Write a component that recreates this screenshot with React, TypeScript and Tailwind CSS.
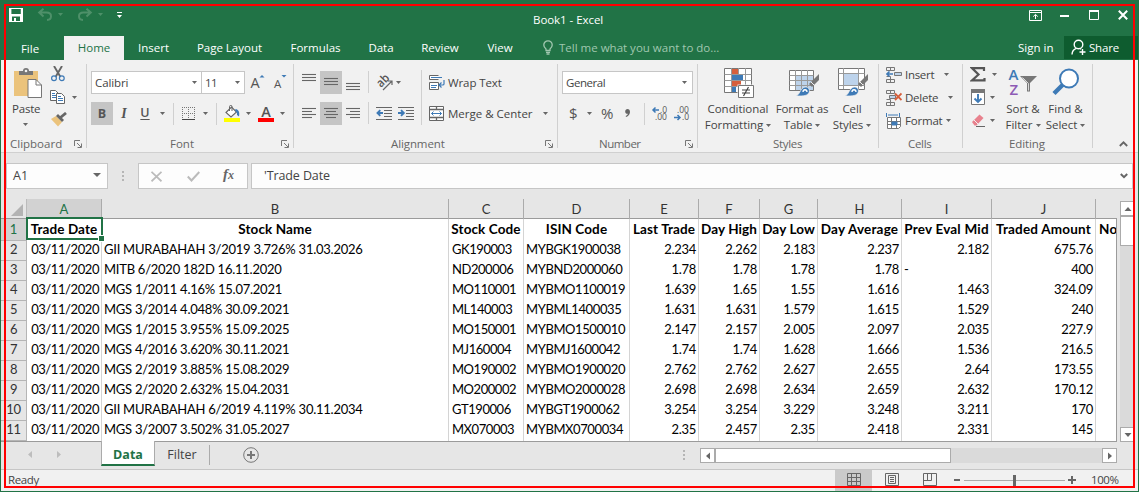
import React from "react";

type P = { className?: string };

const Caret = ({ className = "" }: P) => (
  <svg className={`shrink-0 ${className}`} width="5" height="3" viewBox="0 0 5 3">
    <path d="M0 0h5L2.5 3z" fill="#666" />
  </svg>
);

const Sep = ({ className = "" }: P) => <span className={`w-px shrink-0 bg-[#d0d0d0] ${className}`} />;

const Launcher = () => (
  <svg className="ml-auto mr-[4px] shrink-0" width="8" height="8" viewBox="0 0 8 8" fill="none" stroke="#777">
    <path d="M.5 6V.5H6M3 3l4 4M7.5 3.5v4h-4" />
  </svg>
);

function Group({ className, label, labelClass, launcher, children }: { className: string; label: string; labelClass: string; launcher?: boolean; children: React.ReactNode }) {
  return (
    <section className={`flex shrink-0 ${className}`}>
      <div className="flex min-w-0 flex-1 flex-col">
        <div className="h-[76px] pt-[3px]">{children}</div>
        <div className="flex h-[16px] items-center text-[#666]">
          <span className={`leading-4 ${labelClass}`}>{label}</span>
          {launcher && <Launcher />}
        </div>
      </div>
      <Sep className="mt-1 h-[84px]" />
    </section>
  );
}

const Lines = ({ rows, className = "", selected }: P & { rows: [number, number, number][]; selected?: boolean }) => (
  <span className={`flex h-[23px] w-[22px] shrink-0 ${selected ? "bg-[#c5c5c5]" : ""} ${className}`}>
    <svg width="22" height="23" viewBox="0 0 22 23" stroke="#666" strokeWidth="1.1">
      {rows.map(([x1, x2, y]) => (
        <path key={y} d={`M${x1} ${y}H${x2}`} />
      ))}
    </svg>
  </span>
);

function TitleBar() {
  return (
    <header className="flex h-[36px] items-start text-white">
      <svg className="ml-[8px] mt-[8px]" width="14" height="14" viewBox="0 0 14 14">
        <path fillRule="evenodd" d="M0 0h14v14H0zM2.4 1v5h9.4V1zM3 8.6V13h2v-3h2v3h4V8.6z" fill="#fff" />
      </svg>
      <svg className="ml-[14px] mt-[8px]" width="16" height="13" viewBox="0 0 16 13" fill="none" stroke="#4e9069" strokeWidth="2">
        <path d="M2 4.6h7.5c3 0 4.500 1.600 4.500 3.600s-1.500 3.600-4 3.800M6.500 .8L2.200 4.600l4.300 3.900" />
      </svg>
      <svg className="ml-[5px] mt-[13px]" width="5" height="3" viewBox="0 0 5 3"><path d="M0 0h5L2.500 3z" fill="#4e9069" /></svg>
      <svg className="ml-[14px] mt-[8px]" width="16" height="13" viewBox="0 0 16 13" fill="none" stroke="#4e9069" strokeWidth="2">
        <path d="M14 4.600H6.500C3.500 4.600 2 6.200 2 8.200s1.500 3.600 4 3.800M9.500 .8l4.300 3.800-4.300 3.900" />
      </svg>
      <svg className="ml-[5px] mt-[13px]" width="5" height="3" viewBox="0 0 5 3"><path d="M0 0h5L2.500 3z" fill="#4e9069" /></svg>
      <svg className="ml-[14px] mt-[12px]" width="5" height="6" viewBox="0 0 5 6"><path d="M0 0h5v1H0zM0 3h5L2.500 6z" fill="#fff" /></svg>
      <span className="ml-[411px] mt-[12px] w-[90px] whitespace-nowrap text-[11.5px] leading-4 tracking-[-0.05px]">Book1 - Excel</span>
      <svg className="ml-[406px] mt-[10px]" width="13" height="11" viewBox="0 0 13 11" fill="none" stroke="#fff">
        <path d="M.5 .5h12v10H.5zM.5 2.500h12M6.500 9V4.500M4.200 6.600l2.300-2.200 2.300 2.200" />
      </svg>
      <svg className="ml-[18px] mt-[15px]" width="9" height="2"><path d="M0 0h9v2H0z" fill="#fff" /></svg>
      <svg className="ml-[20px] mt-[10px]" width="10" height="10" viewBox="0 0 10 10" fill="none" stroke="#fff">
        <path d="M.5 .5h9v9h-9z" /><path d="M0 1h10" strokeWidth="2" />
      </svg>
      <svg className="ml-[19px] mt-[10px]" width="10" height="10" viewBox="0 0 10 10" stroke="#fff" strokeWidth="2">
        <path d="M.8 .8l8.400 8.400M9.200 .8L.8 9.200" />
      </svg>
    </header>
  );
}

function TabStrip() {
  return (
    <nav className="flex h-[24px] items-stretch whitespace-nowrap text-center text-[11.5px] leading-[24px] text-white">
      <span className="w-[58px] pt-px">File</span>
      <span className="ml-[5px] w-[60px] bg-[#f1f1f1] text-[#217346]">Home</span>
      <span className="w-[59px]">Insert</span>
      <span className="w-[93px]">Page Layout</span>
      <span className="w-[79px]">Formulas</span>
      <span className="w-[52px]">Data</span>
      <span className="w-[66px]">Review</span>
      <span className="w-[54px]">View</span>
      <svg className="ml-[16px] mt-[4px]" width="10" height="15" viewBox="0 0 10 15" fill="none" stroke="#a0c7af" strokeWidth="1.300">
        <path d="M3 10.500V9C1.700 8 .8 6.700 .8 5a4.200 4.200 0 018.400 0c0 1.700-.9 3-2.200 4v1.500zM3 12.300h4M3.500 14h3" />
      </svg>
      <span className="ml-[6px] w-[162px] text-left text-[#a0c7af]">Tell me what you want to do...</span>
      <span className="ml-[297px] w-[46px] text-left">Sign in</span>
      <span className="flex h-[23px] flex-1 bg-[#0e5c2f]">
        <svg className="ml-[7px] mt-[3px]" width="16" height="17" viewBox="0 0 16 17" fill="none" stroke="#fff" strokeWidth="1.400">
          <circle cx="7.500" cy="5.500" r="4.300" /><path d="M5.500 9.300C3 10 1.200 12 1 15.500M9 9.500l1 .8M11.500 10v6M8.500 13h6" />
        </svg>
        <span className="ml-[2px] tracking-[-0.2px]">Share</span>
      </span>
    </nav>
  );
}

const Clipboard = () => (
  <Group className="w-[86px]" label="Clipboard" labelClass="ml-[9px]" launcher>
    <div className="flex">
      <div className="flex w-[42px] flex-col">
        <svg className="ml-[13px] mt-[5px]" width="28" height="30" viewBox="0 0 28 30">
          <path d="M0 3h24v25H0z" fill="#ebc37c" />
          <path d="M5 7V3h4a3 3 0 016 0h4v4z" fill="#777" /><circle cx="12" cy="3" r="1.300" fill="#f1f1f1" />
          <path d="M14 11.500h8l5.500 5.500v12.500H14z" fill="#fff" stroke="#777" /><path d="M22 11.500V17h5.500" fill="none" stroke="#777" />
        </svg>
        <span className="ml-[11px] mt-[3px] leading-4 tracking-[-0.2px]">Paste</span>
        <Caret className="ml-[22px] mt-[6px]" />
      </div>
      <div className="flex w-[43px] flex-col">
        <svg className="ml-[8px] mt-[3px]" width="14" height="16" viewBox="0 0 14 16" fill="none">
          <path d="M3 0l6.500 11M11 0L4.500 11" stroke="#666" strokeWidth="1.900" />
          <circle cx="3" cy="12.200" r="2.400" stroke="#3e7ab6" strokeWidth="1.200" /><circle cx="10.800" cy="12.200" r="2.400" stroke="#3e7ab6" strokeWidth="1.200" />
        </svg>
        <div className="ml-[7px] mt-[8px] flex items-center">
          <svg width="15" height="14" viewBox="0 0 15 14" stroke="#666">
            <path d="M.5 .5h5l2.500 2.500v7.500H.5z" fill="#fff" /><path d="M2 3.500h3M2 5.500h4M2 7.500h4" stroke="#3e7ab6" />
            <path d="M6.500 3.500h5l3 3v7h-8z" fill="#fff" /><path d="M8 6.500h3M8 8.500h5M8 10.500h5" stroke="#3e7ab6" />
          </svg>
          <Caret className="ml-[7px]" />
        </div>
        <svg className="ml-[8px] mt-[8px]" width="16" height="15" viewBox="0 0 16 15">
          <path d="M0 7l5-3 6 6-4 4.500z" fill="#ebc37c" /><path d="M5 4l2-2 6 6-2 2z" fill="#666" /><path d="M9.500 5.500L15 1" stroke="#666" strokeWidth="2.800" />
        </svg>
      </div>
    </div>
  </Group>
);

const FontGroup = () => (
  <Group className="w-[207px]" label="Font" labelClass="ml-[83px]" launcher>
    <div className="mt-[8px] flex h-[23px] items-center">
      <span className="ml-[4px] flex h-[23px] w-[111px] items-center border border-[#c6c6c6] bg-white pl-[3px] leading-none tracking-[-0.1px]">Calibri<Caret className="ml-auto mr-[4px]" /></span>
      <span className="-ml-px flex h-[23px] w-[44px] items-center border border-[#c6c6c6] bg-white pl-[3px] leading-none tracking-[-0.5px]">11<Caret className="ml-auto mr-[4px]" /></span>
      <svg className="ml-[5px] overflow-visible" width="40" height="23" viewBox="0 0 40 23" fill="#555" fontFamily="Open Sans">
        <text x="0.5" y="17" fontSize="14.500">A</text><path d="M9.500 6.500h5L12 4z" fill="#3e7ab6" />
        <text x="24" y="17" fontSize="11.500">A</text><path d="M31.500 4h5L34 6.500z" fill="#3e7ab6" />
      </svg>
    </div>
    <div className="mt-[8px] flex h-[23px] items-center text-[#555]">
      <span className="ml-[4px] w-[22px] bg-[#c5c5c5] text-center text-[12.500px] font-bold leading-[23px]">B</span>
      <span className="w-[22px] text-center font-['Liberation_Serif'] text-[14px] font-bold italic">I</span>
      <span className="w-[20px] text-center text-[12.500px] font-semibold underline underline-offset-2">U</span>
      <Caret className="ml-[5px]" />
      <Sep className="ml-[8px] h-[22px]" />
      <svg className="ml-[8px]" width="13" height="13" viewBox="0 0 13 13" fill="none" stroke="#777">
        <path d="M0 .5h13M0 6.500h13M.5 0v12M6.500 0v12M12.500 0v12" strokeDasharray="1 1" /><path d="M0 12.500h13" stroke="#444" />
      </svg>
      <Caret className="ml-[8px]" />
      <Sep className="ml-[8px] h-[22px]" />
      <svg className="ml-[7px]" width="16" height="17" viewBox="0 0 16 17">
        <path d="M2 7.500L7.500 2l5 5L7 12z" fill="#fff" stroke="#666" strokeWidth="1.100" /><path d="M5.500 6V1.500C5.500 0 8 0 8 1.500V6" fill="none" stroke="#666" />
        <path d="M11.500 4c3 .5 4.500 3 3.500 7.500l-2-1.500c.3-2-.5-3.500-2-4z" fill="#3e7ab6" /><path d="M0 13h16v4H0z" fill="#ff0" />
      </svg>
      <Caret className="ml-[6px]" />
      <svg className="ml-[7px] overflow-visible" width="16" height="17" viewBox="0 0 16 17">
        <text x="8" y="11.500" textAnchor="middle" fontSize="14.500" fontWeight="600" fill="#555" fontFamily="Open Sans">A</text><path d="M0 13h16v4H0z" fill="red" />
      </svg>
      <Caret className="ml-[6px]" />
    </div>
  </Group>
);

const Alignment = () => (
  <Group className="w-[264px]" label="Alignment" labelClass="ml-[97px] tracking-[-0.1px]" launcher>
    <div className="flex pt-[7px]">
      <div className="mt-px w-[74px]">
        <div className="flex">
          <Lines className="ml-[4px]" rows={[[4, 18, 3.500], [4, 18, 6.500], [4, 18, 9.500]]} />
          <Lines selected rows={[[4, 18, 7.500], [4, 18, 10.500], [4, 18, 13.500]]} />
          <Lines rows={[[4, 18, 12.500], [4, 18, 15.500], [4, 18, 18.500]]} />
        </div>
        <div className="mt-[8px] flex">
          <Lines className="ml-[4px]" rows={[[4, 18, 6.500], [4, 14, 9.500], [4, 18, 12.500], [4, 14, 15.500]]} />
          <Lines selected rows={[[4, 18, 6.500], [6, 16, 9.500], [4, 18, 12.500], [6, 16, 15.500]]} />
          <Lines rows={[[4, 18, 6.500], [8, 18, 9.500], [4, 18, 12.500], [8, 18, 15.500]]} />
        </div>
      </div>
      <div className="mt-px flex flex-col gap-[9px]"><Sep className="h-[22px]" /><Sep className="h-[22px]" /></div>
      <div className="mt-px w-[52px]">
        <div className="flex h-[23px] items-center">
          <svg className="ml-[7px] overflow-visible" width="17" height="16" viewBox="0 0 17 16">
            <text transform="translate(5 13) rotate(-45)" x="0" y="0" fontSize="12" fontWeight="600" fill="#555" fontFamily="Open Sans" textLength="13" lengthAdjust="spacingAndGlyphs">ab</text>
            <path d="M7 15L15.500 6.500M12 6h4v4" fill="none" stroke="#666" strokeWidth="1.200" />
          </svg>
          <Caret className="ml-[3px]" />
        </div>
        <div className="mt-[8px] flex h-[23px] items-center">
          <svg className="ml-[7px]" width="38" height="13" viewBox="0 0 38 13" fill="none" stroke="#666">
            <path d="M0 .5h16M8 3.500h8M8 6.500h8M8 9.500h8M0 12.500h16M22 .5h16M30 3.500h8M30 6.500h8M30 9.500h8M22 12.500h16" />
            <path d="M7 6H2M4.300 3.200L1.500 6l2.800 2.800M22 6h5M25 3.200L27.800 6 25 8.800" stroke="#3e7ab6" strokeWidth="1.900" />
          </svg>
        </div>
      </div>
      <Sep className="h-[55px]" />
      <div className="mt-px">
        <div className="flex h-[23px] items-center">
          <svg className="ml-[7px]" width="16" height="16" viewBox="0 0 16 16" fill="none" stroke="#666">
            <path d="M9.500 4.500h-9v-4h9M.5 7.500h9v7h-9z" fill="#fff" /><path d="M2 2.500h11M2 10.500h6M2 12.500h5M15 5v4c0 .8-.5 1-1.500 1H10M12.500 7.500L10 10l2.500 2.500" stroke="#3e7ab6" strokeWidth="1.200" />
          </svg>
          <span className="ml-[3px] tracking-[-0.1px]">Wrap Text</span>
        </div>
        <div className="mt-[8px] flex h-[23px] items-center">
          <svg className="ml-[7px]" width="15" height="15" viewBox="0 0 15 15" fill="none" stroke="#666">
            <path d="M.5 .5h14v14H.5z" fill="#fff" /><path d="M.5 3.500h14M.5 11.500h14M7.500 0v3M7.500 12v3" strokeWidth="1.300" /><path d="M2.500 7.500h10M4.500 5.500l-2 2 2 2M10.500 5.500l2 2-2 2" stroke="#3e7ab6" />
          </svg>
          <span className="ml-[4px] w-[95px]">Merge &amp; Center</span>
          <Caret />
        </div>
      </div>
    </div>
  </Group>
);

const NumberGroup = () => (
  <Group className="w-[140px]" label="Number" labelClass="ml-[41px] tracking-[-0.5px]" launcher>
    <div className="mt-[8px] flex">
      <span className="ml-[4px] flex h-[23px] w-[131px] items-center border border-[#c6c6c6] bg-white pl-[3px] leading-none tracking-[-0.45px]">General<Caret className="ml-auto mr-[5px]" /></span>
    </div>
    <div className="mt-[8px] flex h-[23px] items-center text-[#555]">
      <span className="ml-[11px] w-[18px] text-[15px] leading-none">$</span>
      <Caret />
      <span className="ml-[9px] w-[22px] text-[15px] leading-none">%</span>
      <svg className="ml-[2px] mt-[-2px]" width="5" height="8" viewBox="0 0 5 8"><path d="M2.500 0C4 0 5 1.200 5 3c0 2.200-1.500 4.200-4 5l-.3-1C2 6.500 2.700 5.800 2.800 4.800 1.200 5 .2 4 .2 2.500.2 1 1.200 0 2.500 0z" fill="#666" /></svg>
      <Sep className="ml-[14px] h-[22px]" />
      <svg className="ml-[7px] overflow-visible" width="37" height="14" viewBox="0 0 37 14" fill="#555" fontFamily="Open Sans" fontSize="8.500">
        <text x="8" y="6">.0</text><text x="3" y="13">.00</text>
        <text x="25" y="6">.00</text><text x="30" y="13">.0</text>
        <path d="M7 3H1M3.500 .5L1 3l2.500 2.500M22 10.500h6M25.500 8L28 10.500 25.500 13" fill="none" stroke="#3e7ab6" strokeWidth="1.500" />
      </svg>
    </div>
  </Group>
);

const BigButton = ({ className, lineA, lineB, icon }: { className: string; lineA: string; lineB: string; icon: React.ReactNode }) => (
  <div className={`flex shrink-0 flex-col items-center whitespace-nowrap ${className}`}>
    <div className="h-[38px] pt-[5px]">{icon}</div>
    <span className="leading-4">{lineA}</span>
    <span className="flex items-center leading-4">{lineB}<Caret className="ml-[3px]" /></span>
  </div>
);

const Brush = () => (
  <>
    <path d="M30 6v6l-7 7-3-3z" fill="#777" /><path d="M22 14l3 3" stroke="#f1f1f1" />
    <path d="M7 28c4-1 4-8 9-9 4-.5 6 4 3 7-2 2-6 2-12 2z" fill="#3e7ab6" stroke="#f1f1f1" strokeWidth=".7" /><path d="M14 24c0-3 4-3 4 0" fill="none" stroke="#fff" strokeWidth="1.300" />
  </>
);

const Styles = () => (
  <Group className="w-[181px]" label="Styles" labelClass="ml-[75px] tracking-[-0.3px]">
    <div className="flex">
      <BigButton className="ml-[4px] w-[72px] tracking-[-0.05px]" lineA="Conditional" lineB="Formatting" icon={
        <svg className="ml-[2px]" width="30" height="30" viewBox="0 0 30 30">
          <path d="M.5 .5h27v24H.5z" fill="#fff" stroke="#777" /><path d="M.5 6.500h27M.5 12.500h27M.5 18.500h27M7.500 0v24M14.500 0v24M21.500 0v24" stroke="#999" />
          <path d="M8 1h6v5H8zM8 13h9v5H8z" fill="#d65f3c" /><path d="M8 7h11v5H8zM8 19h4v5H8z" fill="#3e7ab6" />
          <path d="M13.500 16.500h17v14h-17z" fill="#f1f1f1" /><path d="M14.500 17.500h15v12h-15z" fill="#fff" stroke="#777" /><path d="M18 22h8M18 25h8M24.500 19l-5 9" stroke="#444" strokeWidth="1.200" />
        </svg>} />
      <BigButton className="w-[56px] tracking-[-0.1px]" lineA="Format as" lineB="Table" icon={
        <svg className="ml-[4px]" width="30" height="30" viewBox="0 0 30 30">
          <path d="M.5 2.500h24v20H.5z" fill="#fff" stroke="#777" /><path d="M7 8h17v14H7z" fill="#bdd3eb" /><path d="M.5 7.500h24M.5 12.500h24M.5 17.500h24M6.500 2v20M12.500 2v20M18.500 2v20" stroke="#999" />
          <Brush />
        </svg>} />
      <BigButton className="w-[44px] tracking-[-0.1px]" lineA="Cell" lineB="Styles" icon={
        <svg className="ml-[2px]" width="30" height="30" viewBox="0 0 30 30">
          <path d="M.5 .5h26v21H.5z" fill="#fff" stroke="#777" /><path d="M.5 5.500h26M.5 17.500h26M5.500 0v21M20.500 0v21" stroke="#999" /><path d="M6 6h14v11H6z" fill="#bdd3eb" />
          <Brush />
        </svg>} />
    </div>
  </Group>
);

const Cells = () => (
  <Group className="w-[84px]" label="Cells" labelClass="ml-[29px] tracking-[-0.3px]">
    <div className="flex h-[23px] items-center">
      <svg className="ml-[7px]" width="16" height="16" viewBox="0 0 16 16" fill="none" stroke="#777">
        <path d="M.5 3.500v-3h8v3zM.5 12.500h8v3h-8zM4.500 0v4M4.500 12v4M.5 9.500h4v3" /><path d="M8.500 5.500h7v3h-7z" fill="#bdd3eb" /><path d="M7 7H1M3.500 4.500L1 7l2.500 2.500" stroke="#3e7ab6" strokeWidth="1.600" />
      </svg>
      <span className="ml-[3px] w-[39px] tracking-[-0.3px]">Insert</span><Caret />
    </div>
    <div className="flex h-[23px] items-center">
      <svg className="ml-[7px]" width="16" height="16" viewBox="0 0 16 16" fill="none" stroke="#777">
        <path d="M.5 3.500v-3h8v3zM.5 12.500h8v3h-8zM4.500 0v4M4.500 12v4M.5 9.500h4v3" /><path d="M3.500 5.500h6v3h-6z" fill="#bdd3eb" /><path d="M9 3.500l6.500 6.500M15.500 3.500L9 10" stroke="#d65f3c" strokeWidth="1.800" />
      </svg>
      <span className="ml-[3px] w-[43px] tracking-[-0.25px]">Delete</span><Caret />
    </div>
    <div className="flex h-[23px] items-center">
      <svg className="ml-[7px]" width="16" height="16" viewBox="0 0 16 16" fill="none" stroke="#777">
        <path d="M1.500 4.500h13v9l-2 2h-11z" fill="#fff" /><path d="M5.500 4v11M10.500 4v11M1 8.500h13M1 11.500h13" /><path d="M6 9h5v3H6z" fill="#3e7ab6" stroke="#3e7ab6" /><path d="M.5 0v4M13.500 0v4M2 2h10" stroke="#3e7ab6" />
      </svg>
      <span className="ml-[3px] w-[41px] tracking-[-0.2px]">Format</span><Caret />
    </div>
  </Group>
);

const Editing = () => (
  <Group className="w-[130px]" label="Editing" labelClass="ml-[46px] tracking-[-0.1px]">
    <div className="flex">
      <div className="w-[39px]">
        <div className="flex h-[22px] items-center">
          <svg className="ml-[7px]" width="16" height="15" viewBox="0 0 16 15" fill="none" stroke="#555" strokeWidth="2.200"><path d="M14 4V1.100H2L8.500 7.500 2 13.400h12.500V11" /></svg>
          <Caret className="ml-[6px]" />
        </div>
        <div className="flex h-[24px] items-center">
          <svg className="ml-[8px]" width="14" height="16" viewBox="0 0 14 16"><path d="M.5 .5h13v15H.5z" fill="#fff" stroke="#777" /><path d="M0 0h14v4H0z" fill="#777" /><path d="M7 5v8M3.500 9.500L7 13l3.500-3.500" fill="none" stroke="#3e7ab6" strokeWidth="1.900" /></svg>
          <Caret className="ml-[5px]" />
        </div>
        <div className="flex h-[23px] items-center">
          <svg className="ml-[8px]" width="14" height="13" viewBox="0 0 14 13"><path d="M1 8L8.500 .5l4 3.500L5.500 11.500H3.500z" fill="#e8818d" /><path d="M3 6l4.500 4.500" stroke="#f1f1f1" /><path d="M5 12.500h9" stroke="#666" /></svg>
          <Caret className="ml-[5px]" />
        </div>
      </div>
      <BigButton className="w-[42px]" lineA="Sort &" lineB="Filter" icon={
        <svg className="mt-[-1px] overflow-visible" width="30" height="31" viewBox="0 0 30 31" fontFamily="Open Sans" fontSize="15" fontWeight="600">
          <text x="0.500" y="13" fill="#3e7ab6">A</text><text x="1.500" y="27.500" fill="#8e5bb5">Z</text>
          <path d="M12 9h17l-7 7v8.500h-3V16z" fill="#777" /><path d="M14.500 10.500l6 6v7" stroke="#f1f1f1" fill="none" strokeWidth=".8" />
        </svg>} />
      <BigButton className="w-[43px]" lineA="Find &" lineB="Select" icon={
        <svg width="28" height="28" viewBox="0 0 28 28" stroke="#3e7ab6"><path d="M2 25.500l9-9" strokeWidth="4.500" /><circle cx="17" cy="10.500" r="9" fill="#fff" strokeWidth="2" /></svg>} />
    </div>
  </Group>
);

const fx = "h-[26px] border border-[#c6c6c6] bg-[#fdfdfd]";

function FormulaBar() {
  return (
    <div className="flex h-[46px] items-start pl-[5px] pt-[10px] text-[12.500px] text-[#444]">
      <div className={`flex w-[102px] items-center pl-[6px] pr-[6px] ${fx}`}>
        A1
        <svg className="ml-auto mt-[-3px]" width="8" height="4"><path d="M0 0h8L4 4z" fill="#666" /></svg>
      </div>
      <div className="ml-[14px] mt-[8px] flex w-[2px] flex-col gap-[2px]">
        <i className="h-[2px] bg-[#b5b5b5]" /><i className="h-[2px] bg-[#b5b5b5]" /><i className="h-[2px] bg-[#b5b5b5]" />
      </div>
      <div className={`ml-[14px] flex w-[110px] items-center ${fx}`}>
        <svg className="ml-[12px]" width="11" height="11" viewBox="0 0 11 11" stroke="#bbb" strokeWidth="1.800"><path d="M.5 .8l10 9.500M10.500 .8L.5 10.300" /></svg>
        <svg className="ml-[25px]" width="13" height="11" viewBox="0 0 13 11" fill="none" stroke="#bbb" strokeWidth="2"><path d="M.8 5.500L4.500 9.500 12.300 1" /></svg>
        <span className="ml-[23px] mt-[-3px] font-['Liberation_Serif'] text-[15px] font-bold italic text-[#666]">f<span className="text-[12px]">x</span></span>
      </div>
      <div className={`ml-[3px] flex w-[882px] items-center pl-[12px] pr-[4px] ${fx}`}>
        <span className="mt-px text-[12.500px] tracking-[-0.1px]">'Trade Date</span>
        <svg className="ml-auto" width="8" height="6" viewBox="0 0 8 6" fill="none" stroke="#666" strokeWidth="2"><path d="M.8 1L4 4.200 7.200 1" /></svg>
      </div>
    </div>
  );
}

const COLS = ["A", "B", "C", "D", "E", "F", "G", "H", "I", "J", ""];
const HEAD = ["Trade Date", "Stock Name", "Stock Code", "ISIN Code", "Last Trade", "Day High", "Day Low", "Day Average", "Prev Eval Mid", "Traded Amount", "No"];
const D = "03/11/2020";
const ROWS = [
  [D, "GII MURABAHAH 3/2019 3.726% 31.03.2026", "GK190003", "MYBGK1900038", "2.234", "2.262", "2.183", "2.237", "2.182", "675.76"],
  [D, "MITB 6/2020 182D 16.11.2020", "ND200006", "MYBND2000060", "1.78", "1.78", "1.78", "1.78", "-", "400"],
  [D, "MGS 1/2011 4.16% 15.07.2021", "MO110001", "MYBMO1100019", "1.639", "1.65", "1.55", "1.616", "1.463", "324.09"],
  [D, "MGS 3/2014 4.048% 30.09.2021", "ML140003", "MYBML1400035", "1.631", "1.631", "1.579", "1.615", "1.529", "240"],
  [D, "MGS 1/2015 3.955% 15.09.2025", "MO150001", "MYBMO1500010", "2.147", "2.157", "2.005", "2.097", "2.035", "227.9"],
  [D, "MGS 4/2016 3.620% 30.11.2021", "MJ160004", "MYBMJ1600042", "1.74", "1.74", "1.628", "1.666", "1.536", "216.5"],
  [D, "MGS 2/2019 3.885% 15.08.2029", "MO190002", "MYBMO1900020", "2.762", "2.762", "2.627", "2.655", "2.64", "173.55"],
  [D, "MGS 2/2020 2.632% 15.04.2031", "MO200002", "MYBMO2000028", "2.698", "2.698", "2.634", "2.659", "2.632", "170.12"],
  [D, "GII MURABAHAH 6/2019 4.119% 30.11.2034", "GT190006", "MYBGT1900062", "3.254", "3.254", "3.229", "3.248", "3.211", "170"],
  [D, "MGS 3/2007 3.502% 31.05.2027", "MX070003", "MYBMX0700034", "2.35", "2.457", "2.35", "2.418", "2.331", "145"],
  ["", "", "", "", "", "", "", "", "", ""],
];
const TRACKING = ["tracking-[-0.42px]", "tracking-[-0.25px]", "tracking-[-0.45px]", "tracking-[-0.4px]"];
const TEMPLATE = "grid grid-cols-[26px_75px_347px_75px_106px_69px_61px_58px_84px_90px_104px_21px]";

function Sheet() {
  return (
    <div className="relative h-[243px] w-[1116px] shrink-0 overflow-hidden border-b border-[#9b9b9b] font-['Lato'] text-[13px] text-black">
      <div className={`${TEMPLATE} h-[20px] border-b border-[#9b9b9b] text-center leading-[20px] text-[#333]`}>
        <div className="flex items-end justify-end border-r border-[#bbb] pb-[3px] pr-[3px]"><svg width="12" height="12"><path d="M12 0v12H0z" fill="#b3b3b3" /></svg></div>
        {COLS.map((c, i) => (
          <div key={i} className={i === 0 ? "border-r border-[#ababab] bg-[#d2d2d2] text-[#217346]" : i === 10 ? "" : "border-r border-[#ababab]"}>{c}</div>
        ))}
      </div>
      <div className={`${TEMPLATE} h-[20px] leading-[21px]`}>
        <div className="border-b border-r border-[#b5b5b5] bg-[#d2d2d2] text-center text-[#217346]">1</div>
        {HEAD.map((h, i) => (
          <div key={h} className={`flex justify-center overflow-hidden whitespace-nowrap border-b border-r bg-white text-[13.500px] font-bold ${i === 10 ? "justify-start border-[#d4d4d4] border-r-[#9b9b9b] pl-[3px]" : "border-[#d4d4d4]"} ${i > 6 ? "tracking-[0.2px]" : "tracking-[0.1px]"}`}>{h}</div>
        ))}
      </div>
      {ROWS.map((r, n) => (
        <div key={n} className={`${TEMPLATE} h-[20px] leading-[21px]`}>
          <div className="border-b border-r border-[#b5b5b5] text-center tracking-[-0.4px] text-[#333]">{n < 10 ? n + 2 : ""}</div>
          {[...r, ""].map((v, i) => (
            <div key={i} className={`overflow-hidden whitespace-nowrap border-b border-r bg-white ${i === 10 ? "border-[#d4d4d4] border-r-[#9b9b9b]" : "border-[#d4d4d4]"} ${(i > 3 || i === 0) && v !== "-" ? "pr-[2px] text-right" : i === 2 ? "pl-[3px]" : "pl-[2px]"} ${TRACKING[i] ?? "tracking-[-0.3px]"}`}>{v}</div>
          ))}
        </div>
      ))}
      <div className="absolute left-[25px] top-[18px] h-[23px] w-[77px] border-2 border-[#217346]" />
      <div className="absolute left-[97px] top-[36px] h-[7px] w-[7px] border border-white bg-[#217346]" />
    </div>
  );
}

const Btn = ({ className, d }: { className: string; d: string }) => (
  <span className={`flex shrink-0 items-center justify-center border border-[#ababab] bg-white ${className}`}>
    <svg width="8" height="8" viewBox="0 0 8 8"><path d={d} fill="#666" /></svg>
  </span>
);

function Bottom() {
  return (
    <>
      <div className="flex h-[28px] shrink-0 items-start border-b border-[#c6c6c6]">
        <svg className="ml-[27px] mt-[9px]" width="34" height="8"><path d="M4 0v7L0 3.500zM29 0v7l4-3.500z" fill="#bdbdbd" /></svg>
        <span className="relative ml-[39px] mt-[-1px] h-[25px] w-[54px] border-x border-b-2 border-x-[#ababab] border-b-[#217346] bg-white text-center text-[12.500px] font-bold leading-[27px] text-[#217346]">Data</span>
        <span className="w-[54px] text-center text-[12.500px] leading-[25px] text-[#444]">Filter</span>
        <span className="mt-[3px] h-[20px] w-px bg-[#ababab]" />
        <svg className="ml-[33px] mt-[5px]" width="16" height="16" viewBox="0 0 16 16" fill="none" stroke="#777"><circle cx="8" cy="8" r="7.300" /><path d="M4 8h8M8 4v8" strokeWidth="2" /></svg>
        <div className="ml-[424px] mt-[8px] flex w-[2px] flex-col gap-[2px]">
          <i className="h-[2px] bg-[#b5b5b5]" /><i className="h-[2px] bg-[#b5b5b5]" /><i className="h-[2px] bg-[#b5b5b5]" />
        </div>
        <div className="ml-[15px] mt-[6px] flex h-[15px] w-[417px] bg-[#dadada]">
          <Btn className="h-[15px] w-[15px]" d="M6 .5v7L2 4z" />
          <span className="h-[15px] w-[236px] border border-[#ababab] bg-white" />
          <Btn className="ml-auto h-[15px] w-[15px]" d="M2 .5v7L6 4z" />
        </div>
      </div>
      <footer className="flex h-[21px] shrink-0 items-center bg-[#f1f1f1] text-[11.500px] text-[#444]">
        <span className="ml-[7px] w-[827px] pb-px tracking-[-0.4px]">Ready</span>
        <span className="flex h-full w-[37px] items-center justify-center bg-[#cacaca] pb-[3px]">
          <svg width="14" height="13" viewBox="0 0 14 13" fill="none" stroke="#666"><path d="M.5 .5h13v12H.5zM0 4.500h14M0 8.500h14M4.500 0v13M9.500 0v13" /></svg>
        </span>
        <svg className="mb-[3px] ml-[13px]" width="14" height="13" viewBox="0 0 14 13" fill="none" stroke="#666"><path d="M.5 .5h13v12H.5zM3.500 2.500h7v8h-7zM5 4.500h4M5 6.500h4M5 8.500h4" /></svg>
        <svg className="mb-[3px] ml-[24px]" width="14" height="13" viewBox="0 0 14 13" fill="none" stroke="#666"><path d="M.5 .5h13v12H.5zM.5 7.500h8M8.500 .5v7M4.500 .5v7" /></svg>
        <span className="mb-[1px] ml-[17px] h-[2px] w-[6px] bg-[#666]" />
        <svg className="mb-[1px] ml-[4px]" width="101" height="12"><path d="M0 6.500h101" stroke="#ababab" /><path d="M49 1h3v11h-3z" fill="#666" /></svg>
        <svg className="mb-[1px] ml-[3px]" width="8" height="8"><path d="M0 4h8M4 0v8" stroke="#666" strokeWidth="2" /></svg>
        <span className="ml-[15px] pb-px tracking-[-0.4px]">100%</span>
      </footer>
    </>
  );
}

export default function App() {
  return (
    <div className="relative flex h-[492px] w-[1139px] flex-col overflow-hidden border-x border-b border-[#217346] bg-[#e6e6e6] font-['Open_Sans',sans-serif]">
      <div className="shrink-0 bg-[#217346]">
        <TitleBar />
        <TabStrip />
      </div>
      <div className="flex h-[93px] shrink-0 border-b border-[#d0d0d0] bg-[#f1f1f1] text-[11.500px] text-[#444]">
        <Clipboard />
        <FontGroup />
        <Alignment />
        <NumberGroup />
        <Styles />
        <Cells />
        <Editing />
        <svg className="ml-[26px] mt-[81px]" width="9" height="6" viewBox="0 0 9 6" fill="none" stroke="#666" strokeWidth="1.800"><path d="M.8 5l3.700-3.700L8.200 5" /></svg>
      </div>
      <FormulaBar />
      <div className="flex h-[243px] shrink-0">
        <Sheet />
        <div className="ml-[3px] mt-[2px] flex w-[15px] flex-col bg-[#dadada]">
          <Btn className="h-[15px] w-[15px]" d="M.5 6h7L4 2z" />
          <span className="h-[30px] w-[15px] border border-[#ababab] bg-white" />
          <Btn className="mt-auto h-[15px] w-[15px]" d="M.5 2h7L4 6z" />
        </div>
      </div>
      <Bottom />
      <div className="pointer-events-none absolute left-[3px] top-[4px] h-[484px] w-[1131px] border-2 border-[#f00]" />
    </div>
  );
}
